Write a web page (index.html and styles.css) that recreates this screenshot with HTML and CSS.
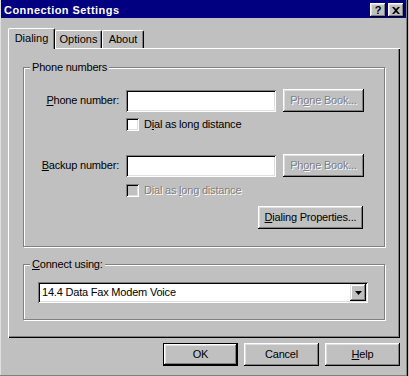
FILE: index.html
```html
<!DOCTYPE html>
<html>
<head>
<meta charset="utf-8">
<title>Connection Settings</title>
<link rel="stylesheet" href="styles.css">
</head>
<body>
<div class="window">
  <div class="titlebar">
    <span class="title">Connection Settings</span>
    <div class="caption-btns">
      <span class="cap-btn">?</span>
      <span class="cap-btn cap-close">
        <svg width="8" height="7" viewBox="0 0 8 7"><path d="M0 0h2l2 2 2-2h2L5 3.5 8 7H6L4 5 2 7H0l3-3.5z" fill="#000"/></svg>
      </span>
    </div>
  </div>
  <div class="content">
    <div class="tabs">
      <div class="tab tab-active">Dialing</div>
      <div class="tab tab-opt">Options</div>
      <div class="tab tab-about">About</div>
    </div>
    <div class="panel">
      <div class="group group-phone">
        <span class="legend">Phone numbers</span>
        <div class="row">
          <span class="lbl"><u>P</u>hone number:</span>
          <span class="field"></span>
          <span class="btn btn-disabled">Ph<u>o</u>ne Book...</span>
        </div>
        <div class="check-row check-row-1">
          <span class="check"></span>
          <span class="check-lbl">D<u>i</u>al as long distance</span>
        </div>
        <div class="row row-backup">
          <span class="lbl"><u>B</u>ackup number:</span>
          <span class="field"></span>
          <span class="btn btn-disabled">Ph<u>o</u>ne Book...</span>
        </div>
        <div class="check-row check-row-2">
          <span class="check check-disabled"></span>
          <span class="check-lbl disabled-text">Dial as <u>l</u>ong distance</span>
        </div>
        <div class="props-row">
          <span class="btn btn-props"><u>D</u>ialing Properties...</span>
        </div>
      </div>
      <div class="group group-connect">
        <span class="legend"><u>C</u>onnect using:</span>
        <div class="combo">
          <span class="combo-text">14.4 Data Fax Modem Voice</span>
          <span class="combo-btn">
            <svg width="7" height="4" viewBox="0 0 7 4"><path d="M0 0h7L3.5 4z" fill="#000"/></svg>
          </span>
        </div>
      </div>
    </div>
    <div class="footer">
      <span class="btn btn-foot btn-default">OK</span>
      <span class="btn btn-foot">Cancel</span>
      <span class="btn btn-foot"><u>H</u>elp</span>
    </div>
  </div>
</div>
</body>
</html>
```

FILE: styles.css
```css
* { box-sizing: border-box; }
html, body {
  margin: 0;
  padding: 0;
  background: #c0c0c0;
}
body {
  width: 409px;
  height: 376px;
  overflow: hidden;
  font-family: "Liberation Sans", Arial, sans-serif;
  font-size: 11px;
  line-height: 13px;
  letter-spacing: -0.2px;
  color: #000;
}
.window {
  width: 408px;
  height: 376px;
  padding: 0 2px 0 1px;
  background: #c0c0c0;
  box-shadow: inset -1px 0 #000, inset -2px 0 #808080, inset 0 -1px #808080, inset 1px 0 #dfdfdf;
}
.titlebar {
  height: 18px;
  background: #000080;
  color: #fff;
  display: flex;
  justify-content: space-between;
  padding: 4px 0 0 3px;
}
.title {
  font-weight: bold;
  font-size: 11px;
  letter-spacing: 0.45px;
}
.caption-btns {
  display: flex;
  gap: 2px;
  margin-right: 2px;
  margin-top: -1px;
}
.cap-btn {
  width: 16px;
  height: 14px;
  background: #c0c0c0;
  color: #000;
  font-weight: bold;
  font-size: 11px;
  line-height: 12px;
  letter-spacing: 0;
  display: flex;
  align-items: center;
  justify-content: center;
  box-shadow: inset -1px -1px #000, inset 1px 1px #fff, inset -2px -2px #808080, inset 2px 2px #dfdfdf;
}
.content {
  padding: 10px 6px 0 7px;
}
.tabs {
  display: flex;
  align-items: flex-end;
  height: 20px;
}
.tab {
  height: 18px;
  border-left: 1px solid #fff;
  border-top: 1px solid #fff;
  border-right: 1px solid #000;
  border-radius: 2px 2px 0 0;
  box-shadow: inset -1px 0 #808080;
  padding-top: 2px;
  text-align: center;
  background: #c0c0c0;
  letter-spacing: 0;
}
.tab-active {
  width: 47px;
  height: 21px;
  margin-bottom: -1px;
  position: relative;
  z-index: 1;
  padding-top: 3px;
}
.tab-opt { width: 47px; }
.tab-about { width: 42px; }
.panel {
  width: 392px;
  height: 290px;
  padding: 19px 14px 0 15px;
  box-shadow: inset 1px 1px #fff, inset -1px -1px #000, inset -2px -2px #808080;
}
.group {
  position: relative;
  width: 362px;
  border: 1px solid #808080;
  box-shadow: 1px 1px 0 #fff, inset 1px 1px 0 #fff;
}
.group-phone {
  height: 180px;
  padding-top: 21px;
}
.group-connect {
  height: 56px;
  margin-top: 17px;
  padding: 17px 0 0 14px;
}
.legend {
  position: absolute;
  top: -7px;
  left: 6px;
  padding: 0 2px;
  background: #c0c0c0;
}
.row {
  display: flex;
  align-items: center;
  height: 23px;
}
.row-backup { margin-top: 23px; }
.lbl {
  width: 95px;
  text-align: right;
  margin-right: 7px;
}
.field {
  width: 150px;
  height: 22px;
  background: #fff;
  margin-right: 7px;
  box-shadow: inset 1px 1px #808080, inset -1px -1px #fff, inset 2px 2px #000, inset -2px -2px #dfdfdf;
}
.btn {
  display: flex;
  align-items: center;
  justify-content: center;
  height: 23px;
  background: #c0c0c0;
  box-shadow: inset -1px -1px #000, inset 1px 1px #fff, inset -2px -2px #808080, inset 2px 2px #dfdfdf;
  white-space: nowrap;
}
.row .btn { width: 81px; }
.btn-disabled {
  color: #808080;
  text-shadow: 1px 1px 0 #fff;
}
.check-row {
  display: flex;
  align-items: center;
  height: 13px;
  padding-left: 102px;
}
.check-row-1 { margin-top: 6px; }
.check-row-2 { margin-top: 7px; }
.check {
  width: 13px;
  height: 13px;
  background: #fff;
  margin-right: 5px;
  box-shadow: inset 1px 1px #808080, inset -1px -1px #fff, inset 2px 2px #000, inset -2px -2px #dfdfdf;
}
.check-disabled { background: #c0c0c0; }
.disabled-text {
  color: #808080;
  text-shadow: 1px 1px 0 #fff;
}
.props-row {
  display: flex;
  justify-content: flex-end;
  margin-top: 9px;
  padding-right: 21px;
}
.btn-props { width: 105px; }
.combo {
  display: flex;
  align-items: center;
  justify-content: space-between;
  width: 330px;
  height: 21px;
  background: #fff;
  padding: 2px 2px 2px 4px;
  box-shadow: inset 1px 1px #808080, inset -1px -1px #fff, inset 2px 2px #000, inset -2px -2px #dfdfdf;
}
.combo-btn {
  width: 16px;
  height: 17px;
  background: #c0c0c0;
  display: flex;
  align-items: center;
  justify-content: center;
  box-shadow: inset -1px -1px #000, inset 1px 1px #dfdfdf, inset -2px -2px #808080, inset 2px 2px #fff;
}
.footer {
  display: flex;
  justify-content: flex-end;
  gap: 6px;
  margin-top: 5px;
}
.btn-foot { width: 75px; }
.btn-default {
  border: 1px solid #000;
}
u { text-decoration: underline; text-underline-offset: 1px; }
```
